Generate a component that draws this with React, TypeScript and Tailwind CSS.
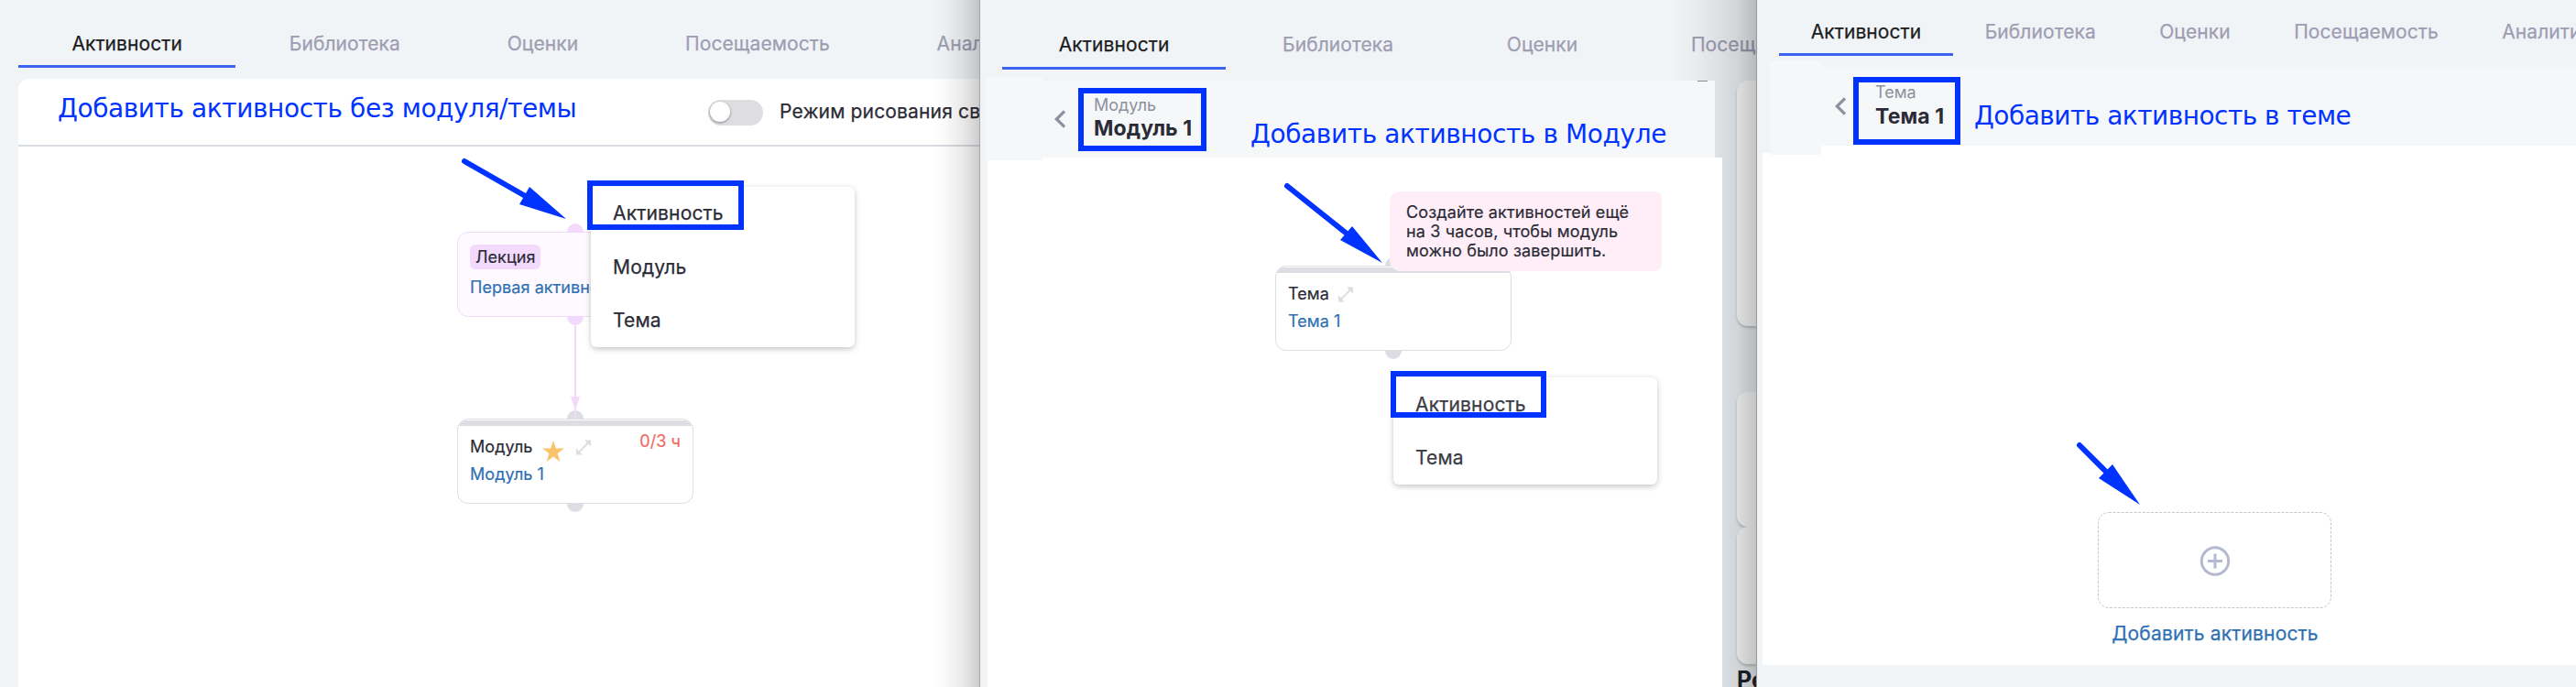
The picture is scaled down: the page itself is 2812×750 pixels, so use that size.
import React from "react";

type Kids = { children?: React.ReactNode; className?: string };

function Tabs({ items, itemClass }: { items: string[]; itemClass: string }) {
  return (
    <nav className="flex w-full shrink-0 overflow-hidden text-[21px] tracking-[0.08px] text-[#9f9db2]">
      {items.map((label, i) => (
        <div
          key={label}
          className={
            "flex shrink-0 items-end whitespace-nowrap border-b-[3px] leading-[26px] [-webkit-text-stroke:0.25px_currentColor] " +
            itemClass +
            (i === 0 ? " border-[#3c64f0] text-[#1c1c1e]" : " border-transparent")
          }
        >
          {label}
        </div>
      ))}
    </nav>
  );
}

function Arrow({ from, a, b, tip }: { from: number[]; a: number[]; b: number[]; tip: number[] }) {
  return (
    <g fill="#0033ff">
      <line
        x1={from[0]}
        y1={from[1]}
        x2={(a[0] + b[0]) / 2}
        y2={(a[1] + b[1]) / 2}
        stroke="#0033ff"
        strokeWidth="6"
        strokeLinecap="round"
      />
      <polygon points={`${a.join(",")} ${b.join(",")} ${tip.join(",")}`} />
    </g>
  );
}

const Expand = () => (
  <svg viewBox="0 0 16 17" className="h-[17px] w-4" fill="#dddee3">
    <path d="M9 0.500H16V7.500zM0 9.500v7h7z" />
    <path d="M2.500 14 13.500 3" stroke="#dddee3" strokeWidth="2" />
  </svg>
);

const Back = ({ className = "" }: Kids) => (
  <svg viewBox="0 0 12 20" className={"h-5 w-3 shrink-0 " + className} fill="none" stroke="#8e90a0" strokeWidth="3.200">
    <path d="M11 1.500 2.300 10l8.700 8.500" />
  </svg>
);

const Note = ({ children, className = "" }: Kids) => (
  <span
    className={
      "shrink-0 whitespace-nowrap font-['DejaVu_Sans',sans-serif] text-[28px] leading-[34px] text-[#0033ff] " + className
    }
  >
    {children}
  </span>
);

const Frame = ({ className = "" }: Kids) => <div className={"absolute border-[6px] border-[#0033ff] " + className} />;

function Menu({ items, className }: { items: string[]; className: string }) {
  return (
    <ul
      className={
        "absolute flex w-[288px] flex-col rounded-md bg-white text-[21px] tracking-[0.16px] shadow-[0_2px_6px_rgba(0,0,0,0.24)] [-webkit-text-stroke:0.25px_currentColor] " +
        className
      }
    >
      {items.map((t) => (
        <li key={t} className="flex flex-1 items-center pl-[24px]">
          {t}
        </li>
      ))}
    </ul>
  );
}

const Node = ({ children, className = "" }: Kids) => (
  <div className={"absolute h-[93px] w-[258px] " + className}>
    <i className="absolute -top-[9px] left-[120px] size-[18px] rounded-full bg-[#dddee3]" />
    <i className="absolute -bottom-[9px] left-[120px] size-[18px] rounded-full bg-[#dddee3]" />
    <div className="relative h-full overflow-hidden rounded-xl border border-[#dddee3] bg-white px-[13px] text-[18px] tracking-[0.06px] text-[#2b2b36] [-webkit-text-stroke:0.2px_currentColor]">
      <i className="-mx-[13px] mt-px block h-[6px] bg-[#dddee3]" />
      {children}
    </div>
  </div>
);

export default function App() {
  return (
    <main className="relative flex h-[750px] w-[2812px] overflow-hidden bg-[#f0f4f7] font-['Inter',sans-serif]">
      <section className="relative flex w-[1070px] shrink-0 flex-col overflow-hidden pl-5">
        <Tabs
          items={["Активности", "Библиотека", "Оценки", "Посещаемость", "Аналитика"]}
          itemClass="px-[58.4px] h-[74px] pb-[10px]"
        />
        <div className="mt-3 flex flex-1 flex-col rounded-tl-xl bg-white">
          <div className="flex h-[74px] shrink-0 items-start border-b-2 border-[#d8dce0]">
            <Note className="ml-[43px] mt-[16px] w-[566px] tracking-[-0.42px]">Добавить активность без модуля/темы</Note>
            <span className="ml-[144px] mt-[23px] flex h-7 w-[60px] shrink-0 rounded-full bg-[#dddde2] p-[2px]">
              <i className="size-[22px] rounded-full bg-white shadow-[0_1px_3px_rgba(0,0,0,0.4)]" />
            </span>
            <span className="ml-[18px] mt-[21px] whitespace-nowrap text-[21px] leading-[30px] tracking-[0.16px] text-[#2b2b36] [-webkit-text-stroke:0.25px_currentColor]">
              Режим рисования связей
            </span>
          </div>
        </div>

        <div className="absolute left-[499px] top-[253px] h-[93px] w-[258px]">
          <i className="absolute -top-[9px] left-[120px] size-[18px] rounded-full bg-[#f3dafc]" />
          <i className="absolute -bottom-[9px] left-[120px] size-[18px] rounded-full bg-[#f3dafc]" />
          <div className="relative flex h-full flex-col items-start rounded-xl border border-[#f3dafc] bg-[#fef9ff] px-[13px] pt-[13px] text-[18px] tracking-[0.06px] text-[#2b2b36] [-webkit-text-stroke:0.2px_currentColor]">
            <span className="h-[27px] rounded-md bg-[#f3dafc] px-1.5 leading-[28px]">Лекция</span>
            <span className="mt-[8px] whitespace-nowrap leading-6 text-[#2f70b3]">Первая активность</span>
          </div>
        </div>

        <Node className="left-[499px] top-[457px]">
          <div className="flex h-[35px] items-start">
            <span className="mt-[11px] leading-6">Модуль</span>
            <svg viewBox="0 0 24 23" className="ml-[11px] mt-4 h-[23px] w-6" fill="#f9c36c">
              <path d="M12 0l2.900 8.600H24l-7.300 5.400 2.700 9L12 17.600 4.600 23l2.700-9L0 8.600h9.100z" />
            </svg>
            <span className="ml-[13px] mt-[15px]">
              <Expand />
            </span>
            <span className="ml-auto mt-[5px] leading-6 text-[#ef6a5f]">0/3 ч</span>
          </div>
          <div className="mt-[6px] leading-6 text-[#2f70b3]">Модуль 1</div>
        </Node>

        <Menu items={["Активность", "Модуль", "Тема"]} className="left-[645px] top-[204px] h-[175px] text-[#2b2b36]" />
        <Frame className="left-[641px] top-[197px] h-[54px] w-[171px]" />
        <svg viewBox="0 0 1070 750" className="absolute inset-0 h-[750px] w-[1070px]">
          <path d="M628 354V457" stroke="#f3dafc" strokeWidth="2" />
          <path d="M623 433h10l-5 15z" fill="#f3dafc" />
          <Arrow from={[507, 176]} a={[578, 204]} b={[567, 223]} tip={[618, 239]} />
        </svg>
        <div className="absolute inset-y-0 right-0 w-[52px] bg-[linear-gradient(to_left,rgba(0,0,0,0.2),rgba(0,0,0,0.09)_35%,rgba(0,0,0,0.02)_75%,transparent)]" />
      </section>

      <section className="relative z-10 flex w-[848px] shrink-0 flex-col overflow-hidden border-l border-[#f0f4f7] bg-[#f0f4f7]">
        <div className="flex pl-[23px]">
          <Tabs items={["Активности", "Библиотека", "Оценки", "Посещаемость"]} itemClass="px-[61.8px] h-[76px] pb-[11px]" />
        </div>
        <div className="absolute right-0 top-[88px] h-[268px] w-[22px] rounded-l-xl bg-white shadow-[0_2px_3px_rgba(0,0,0,0.2)]" />
        <div className="absolute right-0 top-[428px] h-[147px] w-[22px] rounded-l-xl bg-white shadow-[0_2px_3px_rgba(0,0,0,0.2)]" />
        <div className="absolute right-0 top-[575px] h-[150px] w-[22px] rounded-l-xl bg-white shadow-[0_2px_3px_rgba(0,0,0,0.2)]" />
        <div className="absolute right-0 top-[727px] w-[22px] overflow-hidden whitespace-nowrap text-[25px] font-bold leading-[30px] text-[#1f2029]">
          Результаты
        </div>
        <div className="absolute inset-y-0 right-0 w-[96px] bg-[linear-gradient(to_left,rgba(0,0,0,0.24),rgba(0,0,0,0.13)_22%,rgba(0,0,0,0.07)_48%,rgba(0,0,0,0.03)_70%,transparent)]" />
        <div className="absolute left-[5px] top-[84px] h-[91px] w-[62px] bg-[#f6f7f9]" />
        <div className="relative ml-[5px] mt-3 flex h-[85px] w-[796px] shrink-0 items-start bg-[#f6f7f9]">
          <i className="absolute right-2 top-0 h-px w-[11px] bg-[#8a8c8e]" />
          <Back className="ml-[75px] mt-[32px]" />
          <div className="ml-[14px] mt-2 flex h-[69px] w-[140px] shrink-0 flex-col border-[6px] border-[#0033ff] pl-[11px] pt-[3px]">
            <span className="text-[18px] leading-[20px] text-[#8e90a0]">Модуль</span>
            <span className="whitespace-nowrap text-[23px] font-bold leading-[30px] tracking-[0.1px] text-[#2b2b36]">Модуль 1</span>
          </div>
          <Note className="ml-[48px] mt-[42px] tracking-[-0.4px]">Добавить активность в Модуле</Note>
        </div>
        <div className="relative -mt-px ml-[7px] w-[802px] flex-1 bg-white" />
        <div className="absolute left-[5px] top-[172px] h-[3px] w-[62px] bg-[#f6f7f9]" />

        <Node className="left-[321px] top-[290px]">
          <div className="flex h-[35px] items-start">
            <span className="mt-[11px] leading-6">Тема</span>
            <span className="ml-[10px] mt-[15px]">
              <Expand />
            </span>
          </div>
          <div className="mt-[6px] leading-6 text-[#2f70b3]">Тема 1</div>
        </Node>
        <div className="absolute left-[446px] top-[209px] h-[87px] w-[297px] rounded-l-xl rounded-r-lg bg-[#ffeef8] pl-[18px] pt-[12px] text-[18px] leading-[21px] tracking-[0.14px] text-[#2b2b36] [-webkit-text-stroke:0.2px_currentColor]">
          Создайте активностей ещё
          <br />
          на 3 часов, чтобы модуль
          <br />
          можно было завершить.
        </div>
        <Menu items={["Активность", "Тема"]} className="left-[450px] top-[412px] h-[117px] text-[#3b3b45]" />
        <Frame className="left-[447px] top-[405px] h-[51px] w-[170px]" />
        <svg viewBox="1071 0 847 750" className="absolute inset-0 h-[750px] w-[847px]">
          <Arrow from={[1405, 203]} a={[1476, 247]} b={[1463, 262]} tip={[1509, 287]} />
        </svg>
      </section>

      <section className="relative z-20 flex w-[894px] shrink-0 flex-col bg-[#f0f4f7] shadow-[-1px_0_0_#97999b]">
        <div className="flex overflow-hidden pl-6">
          <Tabs
            items={["Активности", "Библиотека", "Оценки", "Посещаемость", "Аналитика"]}
            itemClass="px-[34.7px] h-[61px] pb-[10px]"
          />
        </div>
        <div className="absolute left-1.5 top-[167px] h-[559px] w-16 bg-white" />
        <div className="absolute left-[14px] top-[66px] h-[103px] w-14 bg-[#f6f7f9]" />
        <div className="relative ml-[70px] mt-3 flex h-[86px] shrink-0 items-start bg-[#f6f7f9]">
          <Back className="ml-[15px] mt-[33px]" />
          <div className="ml-[8px] mt-[11px] flex h-[74px] w-[117px] shrink-0 flex-col border-[6px] border-[#0033ff] pl-[18px]">
            <span className="mt-px text-[18px] leading-[20px] text-[#8e90a0]">Тема</span>
            <span className="mt-px whitespace-nowrap text-[23px] font-bold leading-[30px] tracking-[0.1px] text-[#2b2b36]">Тема 1</span>
          </div>
          <Note className="ml-[15px] mt-[37px] tracking-[-0.52px]">Добавить активность в теме</Note>
        </div>
        <div className="ml-[70px] h-[567px] bg-white" />

        <div className="absolute left-[372px] top-[559px] flex w-[256px] flex-col items-center">
          <div className="flex h-[105px] w-full items-center justify-center">
            <svg viewBox="0 0 256 105" className="h-[105px] w-64" fill="none">
              <rect x="0.500" y="0.500" width="254" height="104" rx="11.500" stroke="#c8c8ca" strokeDasharray="3 1.600" />
              <g stroke="#b5b8d1" strokeWidth="3">
                <circle cx="128" cy="53.500" r="14.700" />
                <path d="M120 53.500h16M128 45.500v16" />
              </g>
            </svg>
          </div>
          <span className="mt-[13px] whitespace-nowrap text-[21px] leading-[30px] tracking-[0.16px] text-[#2f70b3] [-webkit-text-stroke:0.25px_currentColor]">
            Добавить активность
          </span>
        </div>
        <svg viewBox="1918 0 894 750" className="absolute inset-0 h-[750px] w-[894px]">
          <Arrow from={[2270, 486]} a={[2306, 507]} b={[2291, 522]} tip={[2336, 551]} />
        </svg>
      </section>
      <i className="absolute left-[1069px] top-0 z-10 h-full w-px bg-[#a3a7aa]" />
    </main>
  );
}
